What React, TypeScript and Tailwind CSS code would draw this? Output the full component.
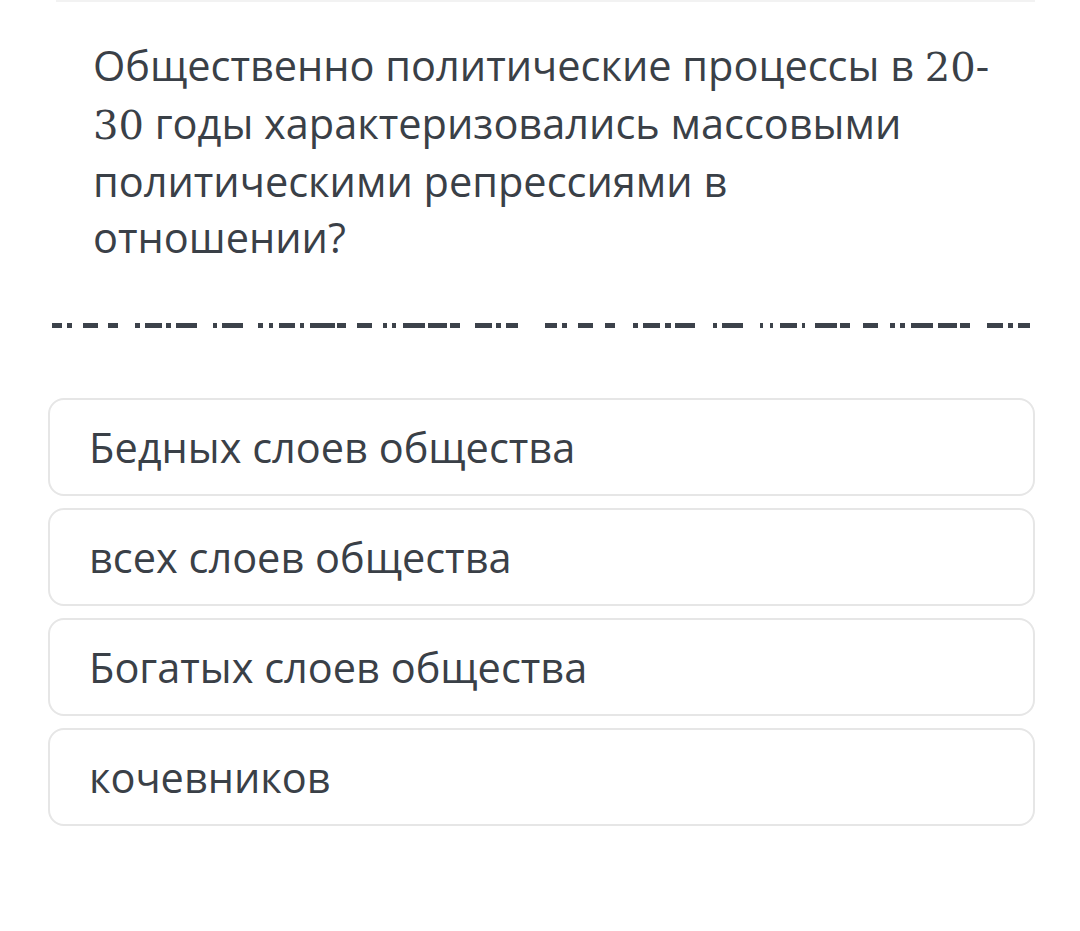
import React from 'react';

// отрезки "обрезанной" строки под вопросом: [начало, конец] по x
const dashes: [number, number][] = [
  [52, 62], [67, 72], [83, 98], [108, 118], [135, 140], [145, 162], [166, 171], [176, 197],
  [213, 217], [222, 243], [258, 263], [269, 273], [279, 295], [300, 304], [310, 335], [337, 346],
  [357, 372], [383, 387], [392, 396], [403, 425], [428, 447], [450, 460], [475, 492], [496, 501],
  [506, 518],
  [545, 557], [562, 567], [578, 593], [605, 615], [633, 638], [643, 660], [665, 671], [675, 695],
  [713, 717], [722, 743], [760, 763], [770, 773], [780, 797], [802, 805], [815, 837], [840, 850],
  [863, 878], [890, 895], [900, 905], [911, 933], [938, 957], [960, 970], [987, 1003], [1008, 1013],
  [1018, 1030],
];

const answers = ['Бедных слоев общества', 'всех слоев общества', 'Богатых слоев общества', 'кочевников'];

const Num = ({ children }: { children: React.ReactNode }) => (
  <span className="font-['DejaVu_Serif',serif] text-[40px]">{children}</span>
);

export default function App() {
  let prev = 0;
  return (
    <div className="w-[1080px] h-[931px] bg-white overflow-hidden font-['Open_Sans',sans-serif] text-[#3a4047]">
      <div className="ml-[56px] w-[979px] h-[2px] bg-[#f2f2f2]" />

      <div className="mt-[35px] pl-[93px] text-[41.5px] leading-[56px]">
        <div>
          Общественно политические процессы в <Num>20</Num>-
        </div>
        <div>
          <Num>30</Num> годы характеризовались массовыми
        </div>
        <div>политическими репрессиями в</div>
        <div>отношении?</div>
      </div>

      <div className="mt-[58px] flex h-[5px]">
        {dashes.map(([a, b], i) => {
          const gap = a - prev;
          prev = b;
          return <div key={i} className="h-full bg-[#3c424a]" style={{ marginLeft: gap, width: b - a }} />;
        })}
      </div>

      <div className="mt-[70px] ml-[48px] w-[987px] flex flex-col gap-[12px]">
        {answers.map((a) => (
          <div
            key={a}
            className="h-[98px] rounded-[16px] border-2 border-[#e6e6e6] flex items-center pl-[39px] text-[41.5px]"
          >
            {a}
          </div>
        ))}
      </div>
    </div>
  );
}
